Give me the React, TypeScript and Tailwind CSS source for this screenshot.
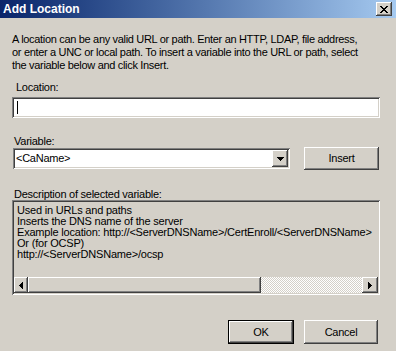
const raised =
  'bg-[#d4d0c8] shadow-[inset_-1px_-1px_0_#404040,inset_1px_1px_0_#ffffff,inset_-2px_-2px_0_#808080,inset_2px_2px_0_#d4d0c8]';
const sunken =
  'shadow-[inset_1px_1px_0_#808080,inset_-1px_-1px_0_#ffffff,inset_2px_2px_0_#404040,inset_-2px_-2px_0_#d4d0c8]';

const descLines = [
  'Used in URLs and paths',
  'Inserts the DNS name of the server',
  'Example location: http://<ServerDNSName>/CertEnroll/<ServerDNSName>',
  'Or (for OCSP)',
  'http://<ServerDNSName>/ocsp',
];

function Arrow({ dir }: { dir: 'down' | 'left' | 'right' }) {
  const pts = dir === 'down' ? '0,0 7,0 3.5,4' : dir === 'left' ? '4,0 4,7 0,3.5' : '0,0 0,7 4,3.5';
  const w = dir === 'down' ? 7 : 4;
  const h = dir === 'down' ? 4 : 7;
  return (
    <svg width={w} height={h} viewBox={`0 0 ${w} ${h}`} shapeRendering="crispEdges">
      <polygon points={pts} fill="#000" />
    </svg>
  );
}

export default function App() {
  return (
    <div className="w-[396px] h-[351px] bg-[#d4d0c8] text-black text-[11px] tracking-[-0.25px] font-['Liberation_Sans',Arial,sans-serif] flex flex-col overflow-hidden">
      {/* Title bar */}
      <div className="h-[18px] shrink-0 flex items-center justify-between pl-[3px] pr-[4px] bg-linear-to-r from-[#0a246a] to-[#a6caf0]">
        <span className="text-white font-bold text-[12px] tracking-normal leading-none">Add Location</span>
        <div className={`w-[16px] h-[14px] flex items-center justify-center ${raised}`}>
          <svg width="8" height="7" viewBox="0 0 8 7" shapeRendering="crispEdges">
            <path d="M0 0h2v1h-2zM6 0h2v1h-2zM1 1h2v1h-2zM5 1h2v1h-2zM2 2h4v1h-4zM3 3h2v1h-2zM2 4h4v1h-4zM1 5h2v1h-2zM5 5h2v1h-2zM0 6h2v1h-2zM6 6h2v1h-2z" fill="#000" />
          </svg>
        </div>
      </div>

      <div className="flex flex-col pl-[12px] pr-[16px]">
        <p className="mt-[15px] leading-[13px] whitespace-nowrap tracking-[-0.32px]">
          A location can be any valid URL or path. Enter an HTTP, LDAP, file address,
          <br />
          or enter a UNC or local path. To insert a variable into the URL or path, select
          <br />
          the variable below and click Insert.
        </p>

        <div className="mt-[9px] pl-[4px] leading-[13px]">Location:</div>
        <div className={`mt-[3px] h-[21px] bg-white flex items-center pl-[5px] ${sunken}`}>
          <div className="w-px h-[13px] bg-black" />
        </div>

        <div className="mt-[17px] pl-[2px] leading-[13px]">Variable:</div>
        <div className="flex items-start">
          <div className={`ml-px w-[277px] h-[21px] bg-white flex items-center justify-between p-[2px] ${sunken}`}>
            <span className="pl-[1px] leading-none">&lt;CaName&gt;</span>
            <div className={`w-[16px] h-[17px] flex items-center justify-center ${raised}`}>
              <Arrow dir="down" />
            </div>
          </div>
          <button className={`ml-[14px] -mt-px w-[75px] h-[23px] flex items-center justify-center ${raised}`}>
            Insert
          </button>
        </div>

        <div className="mt-[18px] pl-[2px] leading-[13px]">Description of selected variable:</div>
        <div className={`mt-[-1px] h-[95px] flex flex-col p-[2px] ${sunken}`}>
          <div className="flex-1 pl-[3px] pt-[3px] leading-[11px] whitespace-nowrap overflow-hidden tracking-[-0.2px]">
            {descLines.map((l) => (
              <div key={l}>{l}</div>
            ))}
          </div>
          <div className="h-[16px] flex">
            <div className={`w-[14px] flex items-center justify-center ${raised}`}>
              <Arrow dir="left" />
            </div>
            <div className={`w-[233px] ${raised}`} />
            <div className="flex-1 bg-[repeating-conic-gradient(#ffffff_0%_25%,#d4d0c8_0%_50%)] bg-[length:2px_2px]" />
            <div className={`w-[16px] flex items-center justify-center ${raised}`}>
              <Arrow dir="right" />
            </div>
          </div>
        </div>

        <div className="mt-[25px] flex justify-end gap-[10px] pr-[2px]">
          <button className="w-[66px] h-[24px] border border-black">
            <div className={`w-full h-full flex items-center justify-center ${raised}`}>OK</div>
          </button>
          <button className={`w-[74px] h-[24px] flex items-center justify-center ${raised}`}>Cancel</button>
        </div>
      </div>
    </div>
  );
}
